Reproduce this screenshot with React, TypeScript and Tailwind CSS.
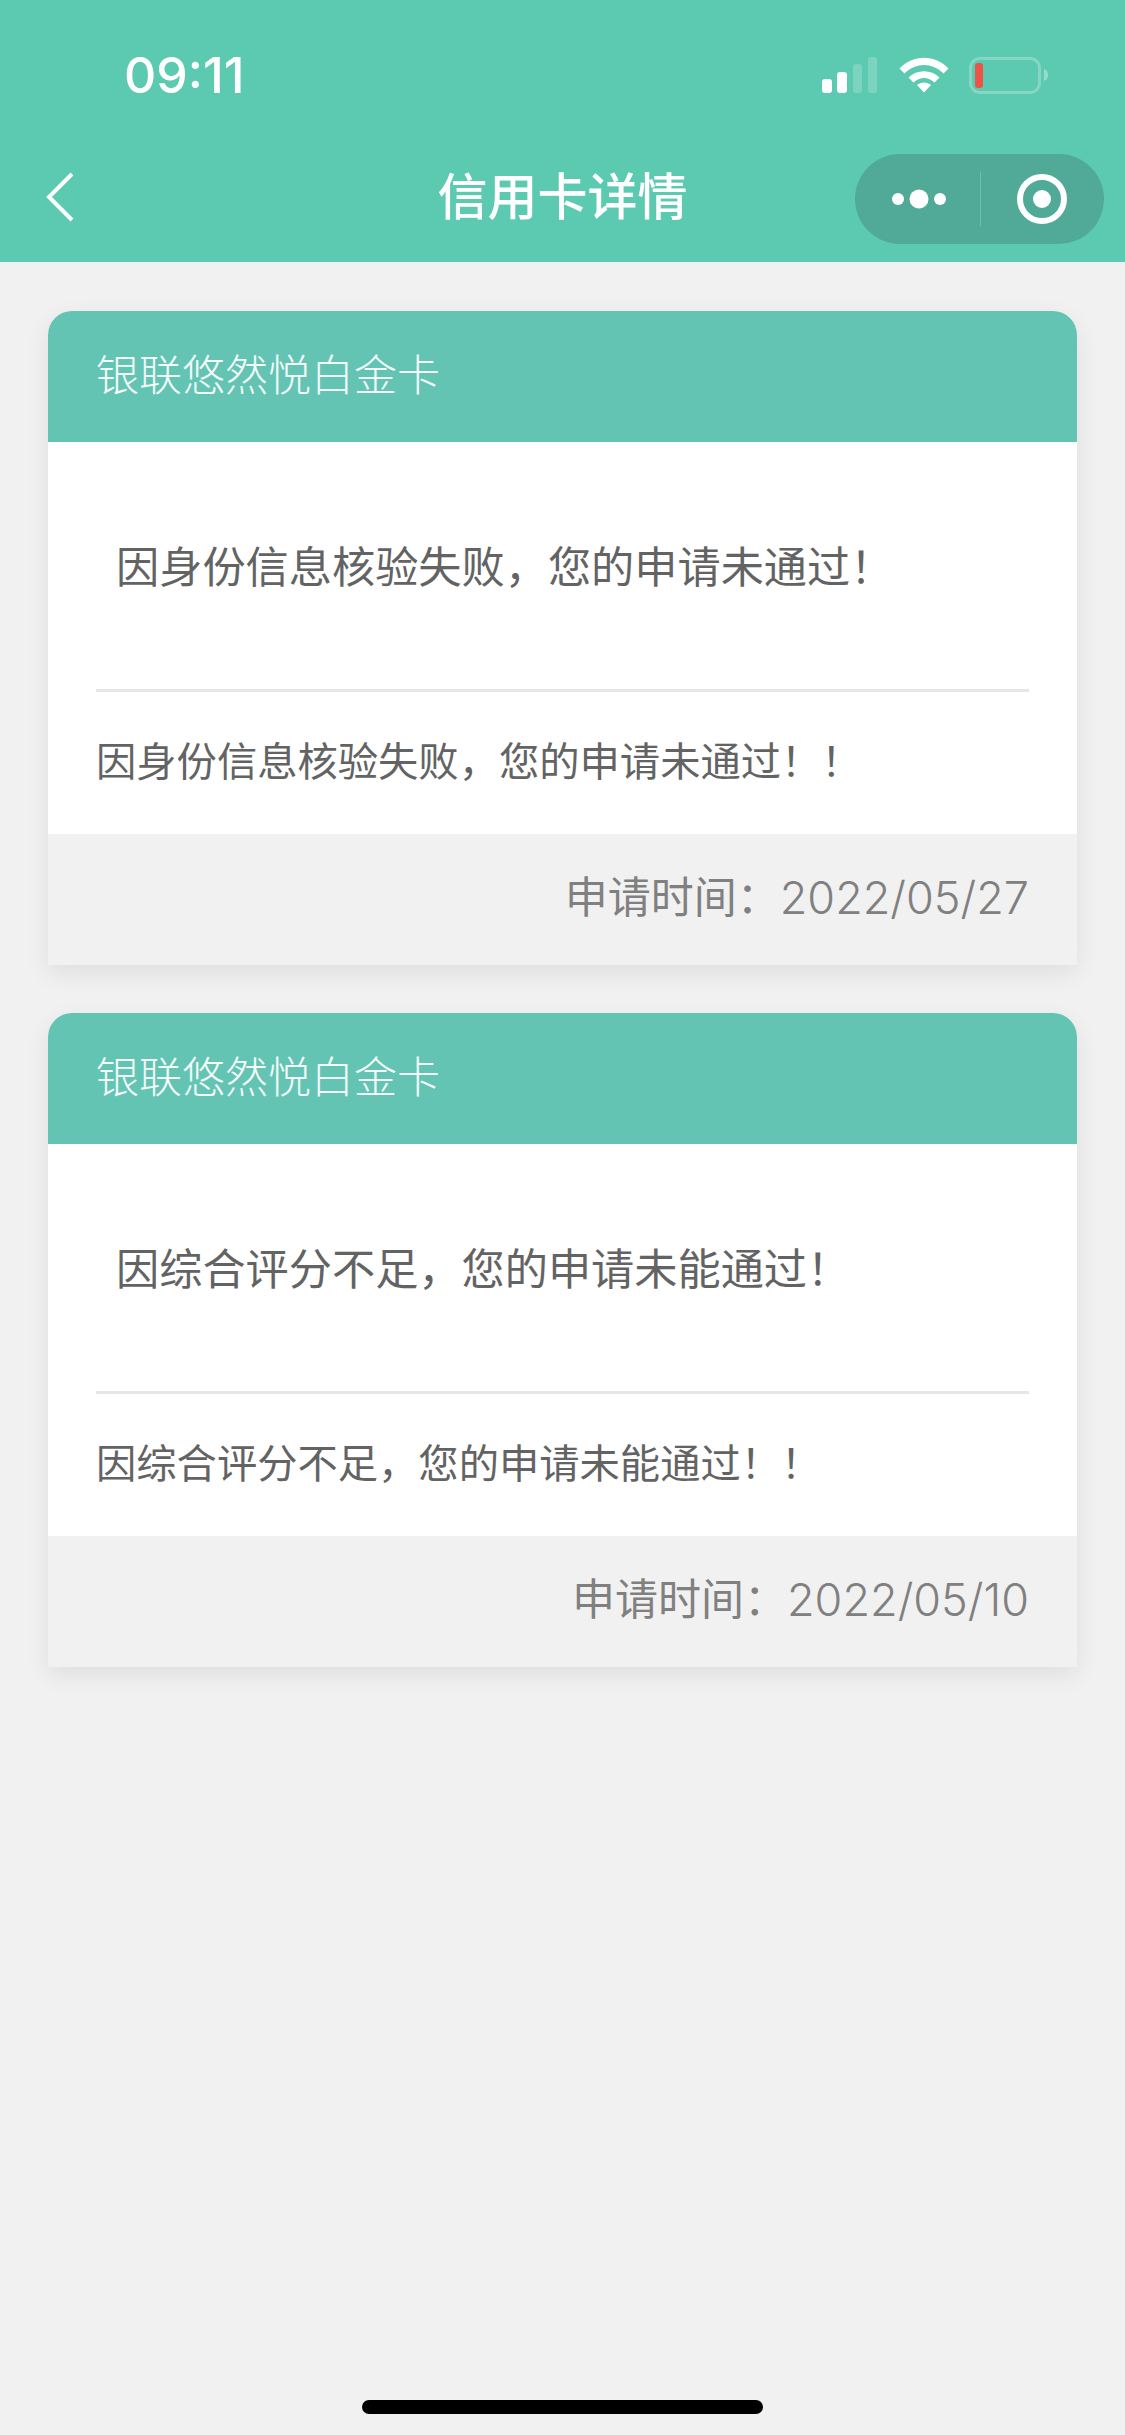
import React from "react";

const fontStack = "font-['Liberation_Sans','Noto_Sans_CJK_SC',sans-serif]";

interface CardProps {
  name: string;
  message: string;
  detail: string;
  date: string;
}

const StatusIcons = () => (
  <div className="flex items-center">
    <svg width="56" height="36" viewBox="0 0 56 36" className="mr-[21px]">
      <rect x="0" y="22" width="10" height="14" rx="3" fill="#fff" />
      <rect x="15" y="15" width="10" height="21" rx="3" fill="#fff" />
      <rect x="31" y="7" width="9" height="29" rx="3" fill="#fff" fillOpacity="0.2" />
      <rect x="46" y="0" width="9" height="36" rx="3" fill="#fff" fillOpacity="0.2" />
    </svg>
    <svg width="50" height="36" viewBox="0 0 50 36" className="mr-[20px]">
      <path d="M0.5 11.5 C14 -3 36 -3 49.5 11.5 L44.5 16.5 C33 5 17 5 5.5 16.5 Z" fill="#fff" />
      <path d="M9.5 20.5 C18 12 32 12 40.5 20.5 L35.5 25.5 C29 19.5 21 19.5 14.5 25.5 Z" fill="#fff" />
      <path d="M18 28 C22 24.5 28 24.5 32 28 L25 35.5 Z" fill="#fff" />
    </svg>
    <div className="flex h-[37px] w-[72px] items-center rounded-[11px] border-[3px] border-white/25 pl-[3px]">
      <div className="h-[25px] w-[8px] rounded-[3px] bg-[#ef5246]" />
    </div>
    <svg width="6" height="12" viewBox="0 0 6 12" className="ml-[2px]">
      <path d="M1 0 C4 1 5 3.5 5 6 C5 8.5 4 11 1 12 Z" fill="#fff" fillOpacity="0.35" />
    </svg>
  </div>
);

const Capsule = () => (
  <div className="flex h-[90px] w-[249px] items-center rounded-full bg-[#50aa97]">
    <div className="flex w-[125px] items-center justify-center">
      <svg width="54" height="20" viewBox="0 0 54 20" className="ml-[3px]">
        <circle cx="6" cy="10" r="6" fill="#fff" />
        <circle cx="27" cy="10" r="9.5" fill="#fff" />
        <circle cx="48" cy="10" r="6" fill="#fff" />
      </svg>
    </div>
    <div className="h-[54px] w-px bg-white/20" />
    <div className="flex flex-1 items-center justify-center">
      <svg width="50" height="50" viewBox="0 0 50 50" className="mr-[1px]">
        <circle cx="25" cy="25" r="22" fill="none" stroke="#fff" strokeWidth="6" />
        <circle cx="25" cy="25" r="9" fill="#fff" />
      </svg>
    </div>
  </div>
);

const Card: React.FC<CardProps> = ({ name, message, detail, date }) => {
  return (
    <div className="overflow-hidden rounded-t-[24px] bg-white shadow-[0_8px_24px_rgba(0,0,0,0.08)]">
      <div className="flex h-[131px] items-center bg-[#64c4b4] px-[48px] text-[43px] text-[#f4fbf9] font-light">
        {name}
      </div>
      <div className="mx-[48px] flex h-[250px] items-center border-b-[3px] border-[#e6e6e6] pl-[20px] pt-[5px] text-[43.2px] text-[#636363]">
        {message}
      </div>
      <div className="flex h-[142px] items-center px-[48px] text-[40.3px] text-[#636363]">
        {detail}
      </div>
      <div className="flex h-[131px] items-center justify-end bg-[#f1f1f1] px-[48px] pb-[3px] text-[43px] text-[#808080]">
        申请时间：<span className="font-['Inter',sans-serif] text-[45px] font-light">{date}</span>
      </div>
    </div>
  );
};

export default function App() {
  return (
    <div className={`flex min-h-[2435px] flex-col bg-[#f1f1f1] ${fontStack}`}>
      <div className="bg-[#5ccab0] text-white">
        <div className="flex h-[132px] items-center justify-between pb-[10px] pl-[124px] pr-[76px] pt-[28px]">
          <span className="font-['Inter',sans-serif] text-[50px] font-medium">09:11</span>
          <StatusIcons />
        </div>
        <div className="relative flex h-[130px] items-start justify-between pl-[45px] pr-[21px] pt-[22px]">
          <svg width="32" height="52" viewBox="0 0 32 52" className="mt-[17px]">
            <path d="M27 3 L4 26 L27 49" fill="none" stroke="#fff" strokeWidth="4" />
          </svg>
          <span className="absolute left-0 right-0 top-[34px] text-center text-[50px] font-medium leading-[64px]">
            信用卡详情
          </span>
          <Capsule />
        </div>
      </div>
      <div className="flex flex-col gap-[48px] px-[48px] pt-[49px]">
        <Card
          name="银联悠然悦白金卡"
          message="因身份信息核验失败，您的申请未通过！"
          detail="因身份信息核验失败，您的申请未通过！！"
          date="2022/05/27"
        />
        <Card
          name="银联悠然悦白金卡"
          message="因综合评分不足，您的申请未能通过！"
          detail="因综合评分不足，您的申请未能通过！！"
          date="2022/05/10"
        />
      </div>
      <div className="mt-auto flex justify-center pb-[21px]">
        <div className="h-[14px] w-[401px] rounded-full bg-black" />
      </div>
    </div>
  );
}
